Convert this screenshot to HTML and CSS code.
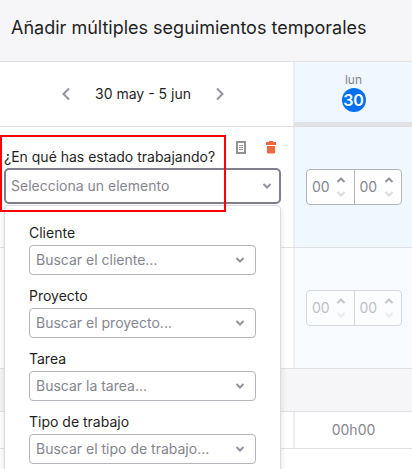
FILE: index.html
```html
<!DOCTYPE html>
<html lang="es">
<head>
  <meta charset="UTF-8" />
  <meta name="viewport" content="width=device-width, initial-scale=1.0"/>
  <title>Añadir múltiples seguimientos temporales</title>
  <link rel="stylesheet" href="styles.css">
</head>
<body>
  <svg width="0" height="0" class="sprite" aria-hidden="true">
    <symbol id="chevron-down" viewBox="0 0 10 8"><path d="M1.5 2 5 5.5 8.5 2"/></symbol>
    <symbol id="chevron-up" viewBox="0 0 10 8"><path d="M1.5 6 5 2.5 8.5 6"/></symbol>
  </svg>

  <header class="header">
    <h1>Añadir múltiples seguimientos temporales</h1>
  </header>

  <main>
    <div class="row row-week">
      <div class="cell-main week">
        <button class="icon-btn" aria-label="Semana anterior">
          <svg class="arrow" viewBox="0 0 8 14"><path d="M7 1.5 1.5 7 7 12.5"/></svg>
        </button>
        <span class="week-range">30 may - 5 jun</span>
        <button class="icon-btn" aria-label="Semana siguiente">
          <svg class="arrow" viewBox="0 0 8 14"><path d="M1 1.5 6.5 7 1 12.5"/></svg>
        </button>
      </div>
      <div class="cell-day day">
        <span class="day-name">lun</span>
        <span class="day-number">30</span>
      </div>
    </div>

    <div class="row row-entry">
      <div class="cell-main entry">
        <div class="entry-top">
          <label for="item">¿En qué has estado trabajando?</label>
          <div class="entry-actions">
            <button class="icon-btn" aria-label="Nota">
              <svg class="note" viewBox="0 0 12 13"><path d="M2 1h8v11H2z"/><path class="thin" d="M4 4.5h4M4 6.5h4M4 8.5h4"/></svg>
            </button>
            <button class="icon-btn" aria-label="Eliminar">
              <svg class="trash" viewBox="0 0 12 13"><path d="M4 0h4v1h3v3H1V1h3zM2 5h8v6.5q0 1-1 1H3q-1 0-1-1z"/></svg>
            </button>
          </div>
        </div>
        <div class="select select-main">
          <select id="item"><option>Selecciona un elemento</option></select>
          <svg class="chevron"><use href="#chevron-down"/></svg>
        </div>

        <div class="dropdown">
          <div class="field">
            <label for="client">Cliente</label>
            <div class="select">
              <select id="client"><option>Buscar el cliente...</option></select>
              <svg class="chevron"><use href="#chevron-down"/></svg>
            </div>
          </div>
          <div class="field">
            <label for="project">Proyecto</label>
            <div class="select">
              <select id="project"><option>Buscar el proyecto...</option></select>
              <svg class="chevron"><use href="#chevron-down"/></svg>
            </div>
          </div>
          <div class="field">
            <label for="task">Tarea</label>
            <div class="select">
              <select id="task"><option>Buscar la tarea...</option></select>
              <svg class="chevron"><use href="#chevron-down"/></svg>
            </div>
          </div>
          <div class="field">
            <label for="type">Tipo de trabajo</label>
            <div class="select">
              <select id="type"><option>Buscar el tipo de trabajo...</option></select>
              <svg class="chevron"><use href="#chevron-down"/></svg>
            </div>
          </div>
        </div>
        <div class="highlight"></div>
      </div>
      <div class="cell-day">
        <div class="time">
          <div class="time-part">
            <input type="text" value="00" aria-label="Horas">
            <div class="steps">
              <button class="icon-btn" aria-label="Más horas"><svg class="chevron"><use href="#chevron-up"/></svg></button>
              <button class="icon-btn off" aria-label="Menos horas"><svg class="chevron"><use href="#chevron-down"/></svg></button>
            </div>
          </div>
          <div class="time-part">
            <input type="text" value="00" aria-label="Minutos">
            <div class="steps">
              <button class="icon-btn" aria-label="Más minutos"><svg class="chevron"><use href="#chevron-up"/></svg></button>
              <button class="icon-btn off" aria-label="Menos minutos"><svg class="chevron"><use href="#chevron-down"/></svg></button>
            </div>
          </div>
        </div>
      </div>
    </div>

    <div class="row row-entry">
      <div class="cell-main"></div>
      <div class="cell-day disabled">
        <div class="time">
          <div class="time-part">
            <input type="text" value="00" aria-label="Horas" disabled>
            <div class="steps">
              <button class="icon-btn" aria-label="Más horas" disabled><svg class="chevron"><use href="#chevron-up"/></svg></button>
              <button class="icon-btn off" aria-label="Menos horas" disabled><svg class="chevron"><use href="#chevron-down"/></svg></button>
            </div>
          </div>
          <div class="time-part">
            <input type="text" value="00" aria-label="Minutos" disabled>
            <div class="steps">
              <button class="icon-btn" aria-label="Más minutos" disabled><svg class="chevron"><use href="#chevron-up"/></svg></button>
              <button class="icon-btn off" aria-label="Menos minutos" disabled><svg class="chevron"><use href="#chevron-down"/></svg></button>
            </div>
          </div>
        </div>
      </div>
    </div>

    <div class="row row-band"></div>

    <div class="row row-total">
      <div class="cell-main"></div>
      <div class="cell-day total">00h00</div>
    </div>
  </main>
</body>
</html>
```
FILE: styles.css
```css
* {
  box-sizing: border-box;
}

body {
  margin: 0;
  min-height: 100vh;
  background: #fff;
  color: #1f1f1f;
  font-family: Inter, "Liberation Sans", sans-serif;
  font-size: 14px;
  line-height: 20px;
  overflow: hidden;
}

.sprite {
  position: absolute;
}

svg {
  display: block;
  fill: none;
  stroke: #92929c;
  stroke-width: 2;
}

input,
select,
button {
  margin: 0;
  font: inherit;
}

.icon-btn {
  display: block;
  padding: 0;
  border: 0;
  background: none;
  cursor: pointer;
}

.header {
  padding: 16px 11px 21px;
  background: #f6f6f9;
  border-bottom: 1px solid #e1e1e4;
}

.header h1 {
  margin: 0;
  font-size: 18px;
  line-height: 24px;
  font-weight: 400;
}

.row {
  display: flex;
  border-bottom: 1px solid #e1e1e4;
}

.cell-main {
  flex: 1;
  min-width: 0;
}

.cell-day {
  width: 119px;
  border-left: 2px solid #eeeef1;
  background: #f0f7ff;
}

/* week selector */
.row-week {
  height: 65px;
}

.week {
  display: flex;
  align-items: center;
  justify-content: center;
  gap: 25px;
  padding-right: 7px;
}

.arrow {
  width: 8px;
  height: 14px;
}

.day {
  display: flex;
  flex-direction: column;
  align-items: center;
  padding-top: 9px;
  border-bottom: 4px solid #e2e2e5;
}

.day-name {
  color: #85858f;
  font-size: 12px;
  line-height: 17px;
}

.day-number {
  width: 24px;
  height: 24px;
  border-radius: 50%;
  background: #0070f5;
  color: #fff;
  font-size: 16px;
  font-weight: 600;
  line-height: 24px;
  text-align: center;
}

/* entries */
.row-entry {
  height: 121px;
}

.row-entry .cell-day {
  padding: 42px 10px 0 11px;
}

.entry {
  position: relative;
  padding: 14px 12px 0 4px;
}

.entry-top {
  display: flex;
  justify-content: space-between;
  height: 27px;
}

.entry-top label {
  padding-top: 6px;
}

.entry-actions {
  display: flex;
  align-items: flex-start;
  gap: 18px;
  padding-right: 4px;
}

.note,
.trash {
  width: 12px;
  height: 13px;
}

.note .thin {
  stroke-width: 1;
}

.trash {
  fill: #f0683c;
  stroke: none;
}

.select {
  position: relative;
}

.select select {
  display: block;
  width: 100%;
  height: 30px;
  padding: 0 24px 0 6px;
  border: 1px solid #b4b4ba;
  border-radius: 4px;
  background: #fff;
  color: #85858f;
  appearance: none;
}

.select .chevron {
  position: absolute;
  right: 11px;
  top: 50%;
  margin-top: -4px;
  pointer-events: none;
}

.select-main select {
  height: 36px;
  padding-left: 5px;
  border: 2px solid #80808c;
  border-radius: 5px;
}

.select-main .chevron {
  right: 9px;
}

.chevron {
  width: 10px;
  height: 8px;
}

.dropdown {
  position: absolute;
  top: 78px;
  left: 4px;
  right: 12px;
  z-index: 1;
  display: flex;
  flex-direction: column;
  gap: 10px;
  padding: 16px 24px 24px;
  border: 1px solid #dcdce0;
  border-radius: 4px;
  background: #fff;
  box-shadow: 0 2px 6px rgba(0, 0, 0, 0.12);
}

.field label {
  display: block;
  padding-bottom: 2px;
  line-height: 21px;
}

.highlight {
  position: absolute;
  top: 8px;
  left: 0;
  width: 226px;
  height: 77px;
  border: 2px solid #f00;
  z-index: 2;
  pointer-events: none;
}

/* time inputs */
.time {
  display: flex;
  height: 36px;
  border: 1px solid #b4b4ba;
  border-radius: 4px;
  background: #fff;
}

.time-part {
  flex: 1;
  display: flex;
  align-items: center;
  gap: 4px;
  padding-left: 5px;
}

.time-part + .time-part {
  border-left: 1px solid #b4b4ba;
}

.time input {
  width: 20px;
  padding: 0;
  border: 0;
  background: none;
  color: #85858f;
}

.steps {
  display: flex;
  flex-direction: column;
  gap: 6px;
}

.off {
  opacity: 0.3;
}

.disabled {
  background: #f8fbff;
}

.disabled .time {
  opacity: 0.5;
}

/* totals */
.row-band {
  height: 43px;
  background: #f6f6f9;
}

.row-total {
  height: 37px;
}

.total {
  background: #fff;
  color: #85858f;
  line-height: 36px;
  text-align: center;
}
```
